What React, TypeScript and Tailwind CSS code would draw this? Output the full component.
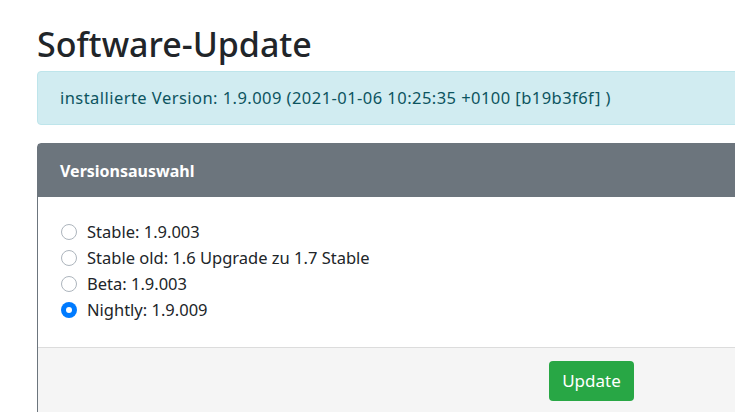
const versions = [
  { id: 'stable', label: 'Stable: 1.9.003' },
  { id: 'stable-old', label: 'Stable old: 1.6 Upgrade zu 1.7 Stable' },
  { id: 'beta', label: 'Beta: 1.9.003' },
  { id: 'nightly', label: 'Nightly: 1.9.009' },
]

function Radio({ checked }: { checked: boolean }) {
  if (checked) {
    return (
      <span className="w-4 h-4 rounded-full bg-[#007bff] flex items-center justify-center flex-shrink-0">
        <span className="w-[6px] h-[6px] rounded-full bg-white" />
      </span>
    )
  }
  return <span className="w-4 h-4 rounded-full border border-[#adb5bd] bg-white flex-shrink-0" />
}

export default function App() {
  return (
    <div className="w-screen h-[412px] overflow-hidden bg-white text-[#212529]" style={{ fontFamily: "'Noto Sans', 'Open Sans', sans-serif" }}>
      <div className="pl-[37px] w-[1110px]">
        <h1 className="pt-[22px] text-[34px] leading-[44px] font-medium mb-[5px]">Software-Update</h1>
        <div className="bg-[#d1ecf1] border border-[#bee5eb] text-[#0c5460] rounded-[4px] px-[22px] h-[54px] flex items-center text-[16.5px] tracking-[0.45px] mb-[18px]">
          installierte Version: 1.9.009 (2021-01-06 10:25:35 +0100 [b19b3f6f] )
        </div>
        <div className="border border-[#6c757d] rounded-t-[4px]">
          <div className="bg-[#6c757d] text-white font-bold text-[16px] h-[53px] flex items-center px-[22px]">
            Versionsauswahl
          </div>
          <div className="bg-white pt-[22px] pb-[24px] px-[23px] flex flex-col">
            {versions.map((v) => (
              <label key={v.id} className="flex items-center gap-[10px] h-[26px] text-[16.5px]">
                <Radio checked={v.id === 'nightly'} />
                <span>{v.label}</span>
              </label>
            ))}
          </div>
          <div className="bg-[#f5f5f5] border-t border-[#dcdcdc] h-[80px] pt-[13px] pl-[511px]">
            <button className="bg-[#28a745] text-white rounded-[4px] w-[85px] h-[40px] text-[17px]">Update</button>
          </div>
        </div>
      </div>
    </div>
  )
}
